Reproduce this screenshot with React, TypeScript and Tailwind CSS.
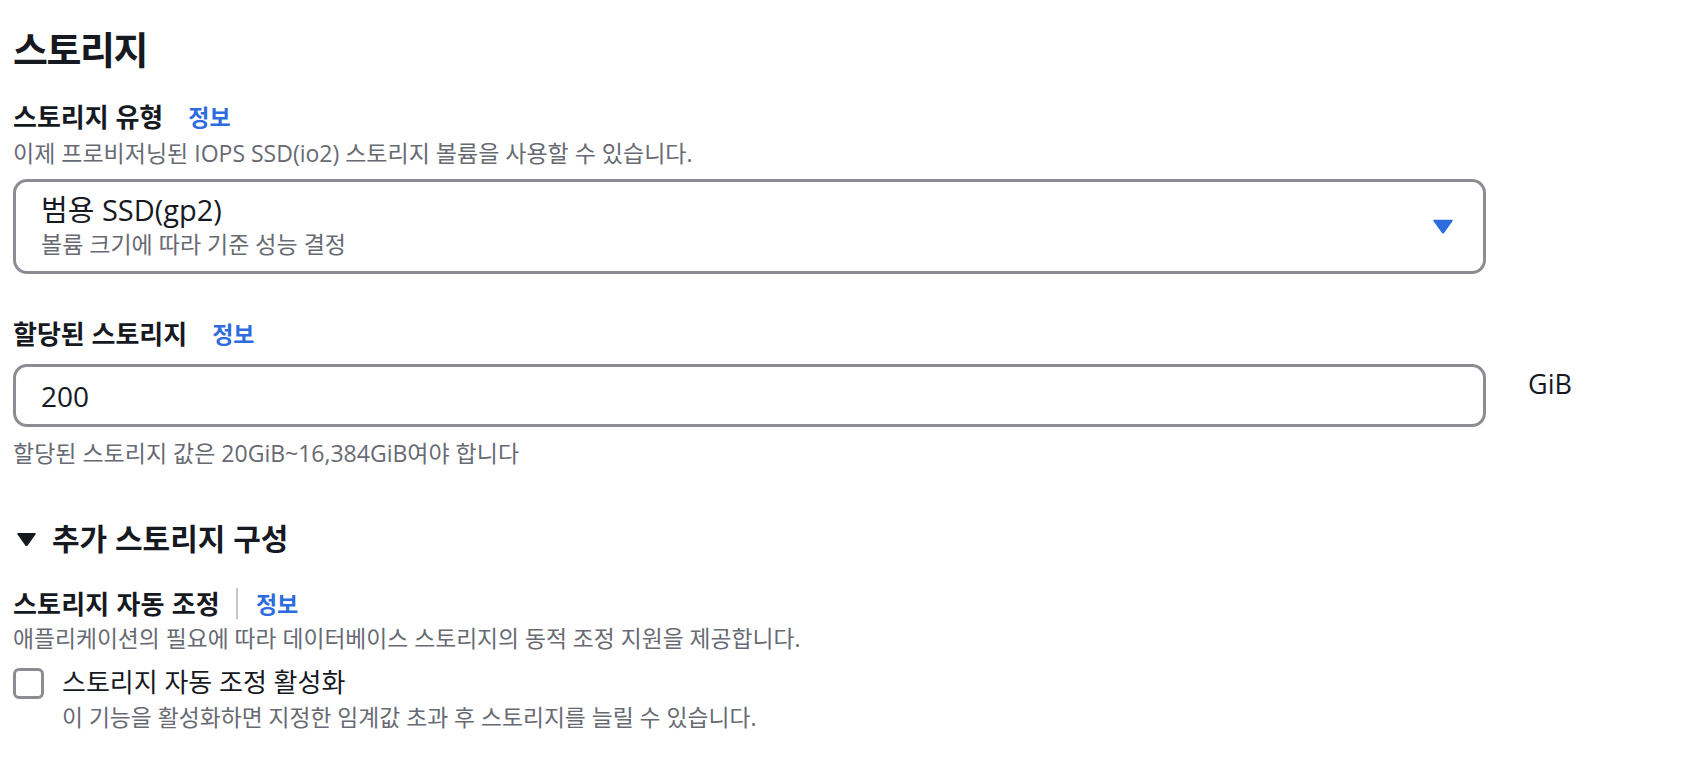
import React from 'react'

const font = { fontFamily: '"Open Sans", "Noto Sans CJK KR", sans-serif' }

function InfoLink() {
  return <a className="text-[23px] font-semibold leading-[30px] text-[#2d6cdf]">정보</a>
}

function Caret({ className }: { className: string }) {
  return (
    <svg viewBox="0 0 20 15" className={className}>
      <path d="M1 1.5h18L10.6 13.4a0.8 0.8 0 0 1-1.2 0z" fill="currentColor" stroke="currentColor" strokeWidth="1.5" strokeLinejoin="round" />
    </svg>
  )
}

export default function App() {
  return (
    <div style={font} className="min-h-screen bg-white pl-[13px] pt-[27px] text-[#16191f]">
      <h2 className="text-[38px] font-bold leading-[44px] tracking-[-1.5px]">스토리지</h2>

      {/* 스토리지 유형 */}
      <div className="mt-[31px] flex items-center gap-[25px]">
        <span className="text-[26px] font-bold leading-[30px]">스토리지 유형</span>
        <InfoLink />
      </div>
      <p className="mt-[7px] text-[23px] leading-[28px] text-[#676a73]">
        이제 프로비저닝된 IOPS SSD(io2) 스토리지 볼륨을 사용할 수 있습니다.
      </p>
      <div className="mt-[12px] flex h-[95px] w-[1473px] items-center justify-between rounded-[14px] border-[3px] border-[#8c8c94] pl-[25px] pr-[30px]">
        <div>
          <div className="text-[29px] leading-[30px]">범용 SSD(gp2)</div>
          <div className="mt-[5px] text-[23px] leading-[28px] text-[#676a73]">볼륨 크기에 따라 기준 성능 결정</div>
        </div>
        <Caret className="h-[15px] w-[20px] text-[#2d6cdf]" />
      </div>

      {/* 할당된 스토리지 */}
      <div className="mt-[45px] flex items-center gap-[25px]">
        <span className="text-[26px] font-bold leading-[30px]">할당된 스토리지</span>
        <InfoLink />
      </div>
      <div className="mt-[15px] flex items-start gap-[42px]">
        <div className="flex h-[63px] w-[1473px] items-center rounded-[14px] border-[3px] border-[#8c8c94] pl-[25px]">
          <span className="text-[28px] leading-[30px]">200</span>
        </div>
        <span className="mt-[5px] text-[27px] leading-[30px]">GiB</span>
      </div>
      <p className="mt-[12px] text-[23px] leading-[28px] text-[#676a73]">
        할당된 스토리지 값은 20GiB~16,384GiB여야 합니다
      </p>

      {/* 추가 스토리지 구성 */}
      <div className="mt-[54px] flex items-center gap-[16px] pl-[4px]">
        <Caret className="h-[15px] w-[19px] text-[#16191f]" />
        <span className="text-[30px] font-bold leading-[36px]">추가 스토리지 구성</span>
      </div>

      <div className="mt-[31px] flex items-center">
        <span className="text-[26px] font-bold leading-[30px] tracking-[0.2px]">스토리지 자동 조정</span>
        <span className="ml-[16px] mr-[18px] h-[31px] w-[2px] bg-[#c6c6cd]" />
        <InfoLink />
      </div>
      <p className="mt-[6px] text-[22.8px] leading-[28px] text-[#676a73]">
        애플리케이션의 필요에 따라 데이터베이스 스토리지의 동적 조정 지원을 제공합니다.
      </p>

      <div className="mt-[14px] flex items-start gap-[18px]">
        <span className="mt-[1px] h-[31px] w-[31px] shrink-0 rounded-[6px] border-[3px] border-[#8c8c94]" />
        <div>
          <div className="text-[26px] leading-[30px]">스토리지 자동 조정 활성화</div>
          <p className="mt-[7px] text-[22.8px] leading-[28px] text-[#676a73]">
            이 기능을 활성화하면 지정한 임계값 초과 후 스토리지를 늘릴 수 있습니다.
          </p>
        </div>
      </div>
    </div>
  )
}
